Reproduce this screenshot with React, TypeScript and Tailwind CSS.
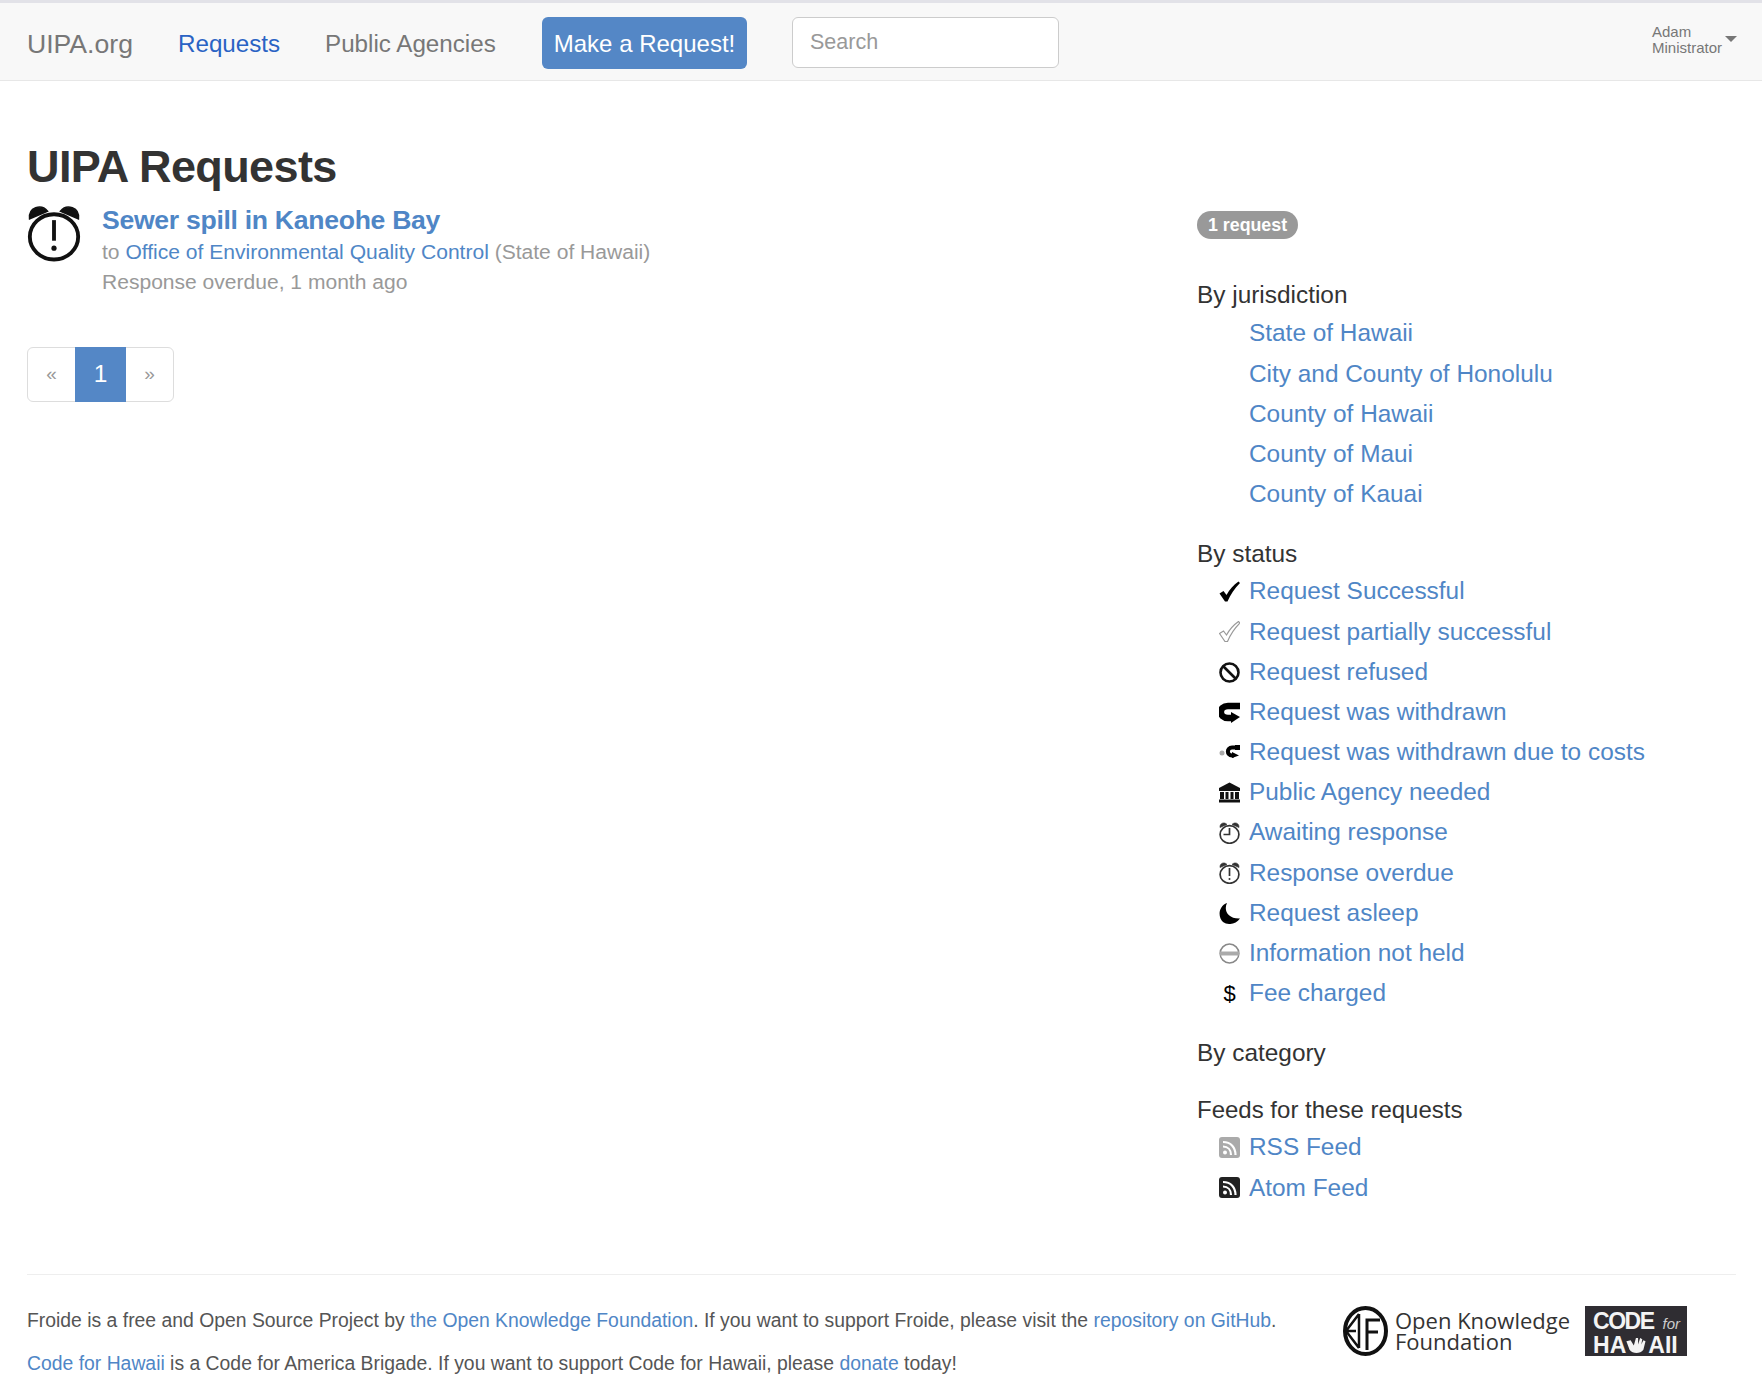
import React from 'react'

const F = '[font-family:"Liberation_Sans",Arial,sans-serif]'

function Check({ partial }: { partial?: boolean }) {
    return (
        <svg viewBox="0 0 21 21" className="w-[21px] h-[21px]">
            <path
                d="M0.5 12.5 L4.5 10 L7.5 14 C10.5 8.5 14.5 4 19.5 0.5 L21 2 C15.5 7.5 11.5 13.5 8.5 20.5 L6 20.5 Z"
                fill={partial ? '#fff' : '#000'}
                stroke={partial ? '#999' : 'none'}
                strokeWidth="1.2"
            />
        </svg>
    )
}

function Ban() {
    return (
        <svg viewBox="0 0 21 21" className="w-[21px] h-[21px]" fill="none" stroke="#111" strokeWidth="2.6">
            <circle cx="10.5" cy="10.5" r="9" />
            <path d="M4.5 4.5 L16.5 16.5" />
        </svg>
    )
}

function Magnet({ small }: { small?: boolean }) {
    return (
        <svg viewBox="0 0 21 21" className="w-[21px] h-[21px]">
            {small ? (
                <g>
                    <circle cx="3" cy="11" r="2.5" fill="#aaa" />
                    <path d="M20 5.5 H13 C7.5 5.5 7.5 13.5 13 13.5 H15" fill="none" stroke="#000" strokeWidth="4" />
                    <path d="M13 10 L20 13.5 L13 16 Z" fill="#000" />
                    <path d="M16 3 H21 V8 H16 Z" fill="#000" />
                </g>
            ) : (
                <g>
                    <path d="M21 4 H9 C-0.5 4 -0.5 16 9 16 H13" fill="none" stroke="#000" strokeWidth="6.5" />
                    <path d="M12 10 L21 15 L12 21 Z" fill="#000" />
                </g>
            )}
        </svg>
    )
}

function Bank() {
    return (
        <svg viewBox="0 0 21 21" className="w-[21px] h-[21px]" fill="#111">
            <path d="M10.5 0.5 L21 6 L21 9 L0 9 L0 6 Z" />
            <path d="M1 10 H5 V17 H1 Z M6.5 10 H9.5 V17 H6.5 Z M11.5 10 H14.5 V17 H11.5 Z M16 10 H20 V17 H16 Z" />
            <path d="M0 17.5 H21 V20.5 H0 Z" />
        </svg>
    )
}

function AlarmClock({ overdue, className, weight = 1.5, color = '#111' }: { overdue?: boolean; className: string; weight?: number; color?: string }) {
    return (
        <svg viewBox="0 0 21 22" className={className} fill="none" stroke={color} strokeWidth={weight}>
            <ellipse cx="10.5" cy="12.5" rx="9.4" ry="8.8" />
            <path d="M1 5.5 C0.5 1 5.5 -0.5 8 2.5 Z M20 5.5 C20.5 1 15.5 -0.5 13 2.5 Z" fill={color} strokeWidth="0.6" />
            {overdue ? (
                <g>
                    <path d="M10.5 6 V14" />
                    <circle cx="10.5" cy="16.9" r="1" fill={color} stroke="none" />
                </g>
            ) : (
                <path d="M10.5 6 V12.5 H4.5" />
            )}
        </svg>
    )
}

function Moon() {
    return (
        <svg viewBox="0 0 21 21" className="w-[21px] h-[21px]">
            <path d="M8 0 C4.5 7 8.5 16 21 15.5 C17 21.5 9 22.5 4 19 C-1.5 14 -0.5 3 8 0 Z" fill="#000" />
        </svg>
    )
}

function NotHeld() {
    return (
        <svg viewBox="0 0 21 21" className="w-[21px] h-[21px]" fill="none">
            <circle cx="10.5" cy="10.5" r="9.4" stroke="#888" strokeWidth="1.5" />
            <path d="M1 8.5 H20 V12.5 H1 Z" fill="#aaa" />
        </svg>
    )
}

function Rss({ dark }: { dark?: boolean }) {
    return (
        <svg viewBox="0 0 21 21" className="w-[21px] h-[21px]">
            <rect width="21" height="21" rx="3" fill={dark ? '#222' : '#aaa'} />
            <circle cx="6" cy="15.5" r="2" fill="#fff" />
            <path d="M4 9.5 C9 9.5 12 13 12 18 M4 5 C12 5 16.5 10.5 16.5 18" fill="none" stroke="#fff" strokeWidth="2.2" />
        </svg>
    )
}

function Dollar() {
    return <span className="w-[21px] text-center text-[22px] font-normal leading-none text-black">$</span>
}

const jurisdictions = ['State of Hawaii', 'City and County of Honolulu', 'County of Hawaii', 'County of Maui', 'County of Kauai']

const statuses: [React.ReactNode, string][] = [
    [<Check />, 'Request Successful'],
    [<Check partial />, 'Request partially successful'],
    [<Ban />, 'Request refused'],
    [<Magnet />, 'Request was withdrawn'],
    [<Magnet small />, 'Request was withdrawn due to costs'],
    [<Bank />, 'Public Agency needed'],
    [<AlarmClock weight={1.7} color="#333" className="w-[21px] h-[22px]" />, 'Awaiting response'],
    [<AlarmClock overdue weight={1.7} color="#333" className="w-[21px] h-[22px]" />, 'Response overdue'],
    [<Moon />, 'Request asleep'],
    [<NotHeld />, 'Information not held'],
    [<Dollar />, 'Fee charged'],
]

function SideRow({ icon, label }: { icon?: React.ReactNode; label: string }) {
    return (
        <li className="flex items-center h-[40.2px] pl-[22px]">
            <span className="w-[21px] h-[22px] mr-[9px] flex items-center justify-center shrink-0">{icon}</span>
            <a className="text-[#4f86c6]">{label}</a>
        </li>
    )
}

export default function App() {
    return (
        <div className={`${F} h-[1378px] overflow-hidden bg-white text-[#333] text-[24.4px]`}>
            {/* Top bar */}
            <div className="h-[3px] bg-[#e2e2e8]"></div>
            <nav className="h-[78px] bg-[#f8f8f8] border-b border-[#e7e7e7] flex items-center pl-[27px] pr-[25px] text-[#777] text-[24.2px]">
                <a className="w-[151px] pt-[6px] text-[26.6px]">UIPA.org</a>
                <a className="w-[147px] pt-[6px] text-[#2a63c4]">Requests</a>
                <a className="w-[217px] pt-[6px]">Public Agencies</a>
                <a className="w-[205px] h-[52px] mt-[2px] pt-[3px] flex items-center justify-center rounded-md bg-[#5487c6] text-white text-[24px]">Make a Request!</a>
                <input
                    placeholder="Search"
                    className="ml-[45px] mt-[1px] w-[267px] h-[51px] pl-[17px] pr-[18px] pt-[1px] bg-white border border-[#ccc] rounded-md text-[21.5px] placeholder:text-[#999]"
                />
                <div className="ml-auto flex items-center -mt-[4px]">
                    <div className="text-[15px] leading-[16px] ml-[1px]">
                        <div>Adam</div>
                        <div>Ministrator</div>
                    </div>
                    <span className="ml-[3px] mb-[2px] w-0 h-0 border-x-[6px] border-x-transparent border-t-[6px] border-t-[#777]"></span>
                </div>
            </nav>

            <div className="px-[27px]">
                <div className="flex">
                    {/* Request list */}
                    <div className="w-[1170px]">
                        <h1 className="mt-[61px] text-[45px] leading-[50px] font-bold tracking-[-0.6px] text-[#333]">UIPA Requests</h1>
                        <div className="mt-[12px] flex">
                            <AlarmClock overdue className="w-[54px] h-[58px] shrink-0" />
                            <div className="ml-[21px] mt-[1px]">
                                <a className="block text-[26.6px] leading-[31px] font-bold tracking-[-0.3px] text-[#4f86c6]">Sewer spill in Kaneohe Bay</a>
                                <div className="text-[21.05px] leading-[30px] text-[#999] mt-[1px]">
                                    to <a className="text-[#4f86c6]">Office of Environmental Quality Control</a> (State of Hawaii)
                                </div>
                                <div className="text-[21.05px] leading-[30px] text-[#999]">Response overdue, 1 month ago</div>
                            </div>
                        </div>
                        <div className="mt-[50px] inline-flex h-[55px] border border-[#ddd] rounded-md text-[#999] text-[19px]">
                            <span className="w-[47px] flex items-center justify-center">«</span>
                            <span className="w-[51px] -my-px flex items-center justify-center bg-[#5487c6] text-white text-[24.5px]">1</span>
                            <span className="w-[47px] flex items-center justify-center">»</span>
                        </div>
                    </div>

                    {/* Filters */}
                    <aside className="pt-[124px]">
                        <span className="inline-flex items-center h-[28px] px-[11px] rounded-full bg-[#999] text-white text-[17.8px] font-bold">1 request</span>
                        <h4 className="mt-[33px] leading-[40px]">By jurisdiction</h4>
                        <ul className="-mt-[1px]">
                            {jurisdictions.map((j) => (
                                <SideRow key={j} label={j} />
                            ))}
                        </ul>
                        <h4 className="mt-[19px] leading-[40px]">By status</h4>
                        <ul className="-mt-[2px]">
                            {statuses.map(([icon, label]) => (
                                <SideRow key={label} icon={icon} label={label} />
                            ))}
                        </ul>
                        <h4 className="mt-[19px] leading-[40px]">By category</h4>
                        <h4 className="mt-[17px] leading-[40px] text-[24px]">Feeds for these requests</h4>
                        <ul className="-mt-[2px]">
                            <SideRow icon={<Rss />} label="RSS Feed" />
                            <SideRow icon={<Rss dark />} label="Atom Feed" />
                        </ul>
                    </aside>
                </div>

                {/* Footer */}
                <footer className="absolute top-[1274px] left-[27px] w-[1709px] border-t border-[#eee] flex text-[19.37px] text-[#555]">
                    <div className="w-[1316px]">
                        <p className="mt-[33px] leading-[24px]">
                            Froide is a free and Open Source Project by <a className="text-[#4f86c6]">the Open Knowledge Foundation</a>. If you want to support Froide, please visit the <a className="text-[#4f86c6]">repository on GitHub</a>.
                        </p>
                        <p className="mt-[19px] leading-[24px]">
                            <a className="text-[#4f86c6]">Code for Hawaii</a> is a Code for America Brigade. If you want to support Code for Hawaii, please <a className="text-[#4f86c6]">donate</a> today!
                        </p>
                    </div>
                    <div className="mt-[31px] flex items-start">
                        <svg viewBox="0 0 45 50" className="w-[45px] h-[50px] shrink-0" fill="none" stroke="#111">
                            <ellipse cx="22.5" cy="25" rx="20.5" ry="23" strokeWidth="4" />
                            <path d="M3 25 H13 M16 8 L3 25 L16 42 M16 8 V42" strokeWidth="2.5" />
                            <path d="M24 44 V14 H37 M24 26 H35" strokeWidth="3" />
                        </svg>
                        <div className={'ml-[7px] [font-family:"Open_Sans",sans-serif] text-[22px] leading-[21px] mt-[4px] text-[#333] whitespace-nowrap'}>
                            <div>Open Knowledge</div>
                            <div>Foundation</div>
                        </div>
                        <div className="ml-[15px] w-[102px] h-[50px] shrink-0 bg-[#2f2d32] text-[#f4f4f4] font-bold pl-[8px] pt-[4px] whitespace-nowrap">
                            <div className="text-[23px] leading-[22px] flex items-baseline tracking-[-1.5px]">
                                CODE
                                <span className="ml-[9px] text-[15px] italic font-normal tracking-normal text-[#ccc]">for</span>
                            </div>
                            <div className="text-[23px] leading-[20px] flex items-center">
                                HA
                                <svg viewBox="0 0 20 16" className="w-[22px] h-[17px]" fill="#f4f4f4">
                                    <path d="M0 4 L4 3 L7 8 L9 1 L11 1 L11 7 L13 1 L15 2 L14 7 L16 3 L18 4 L16 12 C13 16 6 16 3 12 Z" />
                                </svg>
                                AII
                            </div>
                        </div>
                    </div>
                </footer>
            </div>
        </div>
    )
}
